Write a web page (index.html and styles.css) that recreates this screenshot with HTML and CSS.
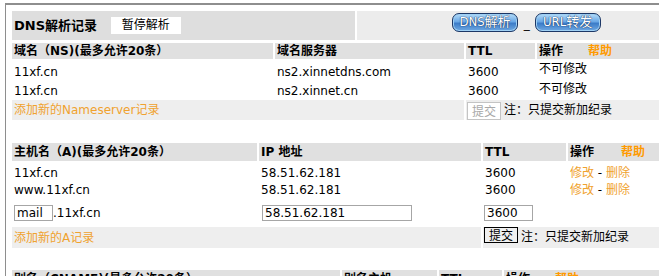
FILE: index.html
```html
<!DOCTYPE html>
<html lang="zh-CN">

<head>
    <meta charset="UTF-8">
    <title>DNS解析记录</title>
    <link rel="stylesheet" href="styles.css">
</head>

<body>
    <div class="panel">

        <table class="titlebar">
            <tr>
                <td class="title-left">
                    <span class="title">DNS解析记录</span>
                    <span class="pause-btn">暂停解析</span>
                </td>
                <td class="title-right">
                    <span class="blue-btn">DNS解析</span>
                    <span class="sep">_</span>
                    <span class="blue-btn url">URL转发</span>
                </td>
            </tr>
        </table>

        <!-- NS records -->
        <table class="records ns-table">
            <colgroup>
                <col class="ns-c1">
                <col class="ns-c2">
                <col class="ns-c3">
                <col class="ns-c4">
            </colgroup>
            <tr class="head">
                <th>域名（NS)(最多允许20条）</th>
                <th>域名服务器</th>
                <th>TTL</th>
                <th>操作<span class="help">帮助</span></th>
            </tr>
            <tr class="row first">
                <td>11xf.cn</td>
                <td>ns2.xinnetdns.com</td>
                <td>3600</td>
                <td class="fixed">不可修改</td>
            </tr>
            <tr class="row second">
                <td>11xf.cn</td>
                <td>ns2.xinnet.cn</td>
                <td>3600</td>
                <td class="fixed">不可修改</td>
            </tr>
            <tr class="add-row">
                <td colspan="2"><span class="add-link">添加新的Nameserver记录</span></td>
                <td colspan="2" class="submit-cell">
                    <button class="submit disabled" disabled>提交</button><span class="note">注：只提交新加纪录</span>
                </td>
            </tr>
        </table>

        <!-- A records -->
        <table class="records a-table">
            <colgroup>
                <col class="a-c1">
                <col class="a-c2">
                <col class="a-c3">
                <col class="a-c4">
            </colgroup>
            <tr class="head">
                <th>主机名（A)(最多允许20条）</th>
                <th>IP 地址</th>
                <th>TTL</th>
                <th>操作<span class="help wide">帮助</span></th>
            </tr>
            <tr class="row first">
                <td>11xf.cn</td>
                <td>58.51.62.181</td>
                <td>3600</td>
                <td><span class="link">修改</span> - <span class="link">删除</span></td>
            </tr>
            <tr class="row second">
                <td>www.11xf.cn</td>
                <td>58.51.62.181</td>
                <td>3600</td>
                <td><span class="link">修改</span> - <span class="link">删除</span></td>
            </tr>
            <tr class="row input-row">
                <td><input type="text" class="host-input" value="mail">.11xf.cn</td>
                <td><input type="text" class="ip-input" value="58.51.62.181"></td>
                <td><input type="text" class="ttl-input" value="3600"></td>
                <td></td>
            </tr>
            <tr class="add-row a-add">
                <td colspan="2"><span class="add-link">添加新的A记录</span></td>
                <td colspan="2" class="submit-cell">
                    <button class="submit">提交</button><span class="note">注：只提交新加纪录</span>
                </td>
            </tr>
        </table>

        <!-- CNAME records -->
        <table class="records cname-table">
            <colgroup>
                <col class="c-c1">
                <col class="c-c2">
                <col class="c-c3">
                <col class="c-c4">
            </colgroup>
            <tr class="head">
                <th>别名（CNAME)(最多允许20条）</th>
                <th>别名主机</th>
                <th>TTL</th>
                <th>操作<span class="help">帮助</span></th>
            </tr>
        </table>

    </div>
</body>

</html>
```

FILE: styles.css
```css
body {
    margin: 0;
    padding: 0;
    background: #fff;
    overflow: hidden;
    font-family: "DejaVu Sans", "Noto Sans CJK SC", sans-serif;
    font-size: 12px;
    color: #000;
}

.panel {
    width: 649px;
    height: 270px;
    overflow: hidden;
    margin: 3px 0 0 5px;
    padding: 6px 0 0 4px;
    border-top: 2px solid #8e8e8e;
    border-left: 1px solid #8e8e8e;
}

table {
    border-collapse: separate;
    border-spacing: 2px 0;
    table-layout: fixed;
    width: 651px;
}

td,
th {
    padding: 0 2px;
    line-height: 16px;
    white-space: nowrap;
    overflow: hidden;
    text-align: left;
    vertical-align: middle;
}

/* title bar */

.titlebar td {
    height: 27px;
    padding: 0;
}

.title-left {
    width: 343px;
    background-color: #dedede;
}

.title-right {
    background-color: #ececec;
    vertical-align: top;
}

.title {
    font-size: 13px;
    font-weight: bold;
    margin-left: 2px;
}

.pause-btn {
    display: inline-block;
    width: 70px;
    height: 17px;
    line-height: 17px;
    margin-left: 10px;
    background-color: #fff;
    text-align: center;
    vertical-align: 1px;
}

.title-right {
    padding: 2px 0 0 95px !important;
}

.blue-btn {
    display: inline-block;
    box-sizing: border-box;
    width: 66px;
    height: 19px;
    line-height: 16px;
    border: 1px solid #1c3766;
    border-radius: 7px;
    background: linear-gradient(#b5dcf8, #6aa8e6 45%, #3c7cc8 55%, #6fa9e2);
    box-shadow: inset 0 0 0 1px #9fd0f4;
    color: #fff;
    text-align: center;
    font-family: "DejaVu Sans Condensed", "Noto Sans CJK SC", sans-serif;
    font-stretch: condensed;
    font-size: 13px;
    text-shadow: 0 0 1px #15315e, 0 0 1px #15315e;
}

.sep {
    display: inline-block;
    margin: 0 1px 0 2px;
    vertical-align: -2px;
}

/* record tables */

.ns-c1 { width: 261px; }
.ns-c2 { width: 189px; }
.ns-c3 { width: 69px; }

.a-c1 { width: 245px; }
.a-c2 { width: 222px; }
.a-c3 { width: 83px; }

.c-c1 { width: 328px; }
.c-c2 { width: 95px; }
.c-c3 { width: 63px; }

.ns-table {
    margin-top: 3px;
}

.a-table {
    margin-top: 23px;
}

.cname-table {
    margin-top: 22px;
}

.head th {
    background-color: #e0e0e0;
    font-weight: bold;
}

.ns-table .head th {
    height: 16px;
}

.a-table .head th,
.cname-table .head th {
    height: 18px;
}

.help {
    color: #ff9a00;
    margin-left: 25px;
}

.help.wide {
    margin-left: 27px;
}

.ns-table .first td {
    height: 18px;
    padding-top: 4px;
}

.ns-table .second td {
    height: 19px;
}

.ns-table .fixed {
    vertical-align: top;
    padding-top: 0;
}

.ns-table .first .fixed {
    padding-top: 2px;
}

.a-table .first td {
    height: 17px;
    padding-top: 3px;
}

.a-table .second td {
    height: 17px;
}

.input-row td {
    height: 28px;
    padding-top: 1px;
}

.add-row td {
    height: 20px;
    background-color: #eeeeee;
}

.a-add td {
    height: 21px;
}

.add-link,
.link {
    color: #f0a22e;
}

input[type="text"] {
    box-sizing: border-box;
    height: 16px;
    padding: 0 2px;
    margin: 0;
    border: 1px solid #a6a6a6;
    font-family: "DejaVu Sans", sans-serif;
    font-size: 12px;
    line-height: 14px;
    vertical-align: middle;
}

.host-input {
    width: 39px;
}

.ip-input {
    width: 150px;
    margin-left: 1px !important;
}

.ttl-input {
    width: 49px;
    margin-left: -1px !important;
}

.submit-cell {
    vertical-align: top;
    padding-left: 1px;
}

.submit {
    box-sizing: border-box;
    width: 34px;
    height: 16px;
    padding: 0;
    margin: 0;
    border: 1px solid #000;
    background-color: #f0f0f0;
    font-family: "Noto Sans CJK SC", sans-serif;
    font-size: 12px;
    line-height: 14px;
    vertical-align: top;
    color: #000;
}

.submit.disabled {
    height: 18px;
    margin-top: 2px;
    border-color: #c4c4c4;
    background-color: #fff;
    color: #a8a8a8;
}

.note {
    display: inline-block;
    margin-left: 3px;
    line-height: 20px;
    vertical-align: top;
}

.a-add .note {
    line-height: 21px;
}
```
